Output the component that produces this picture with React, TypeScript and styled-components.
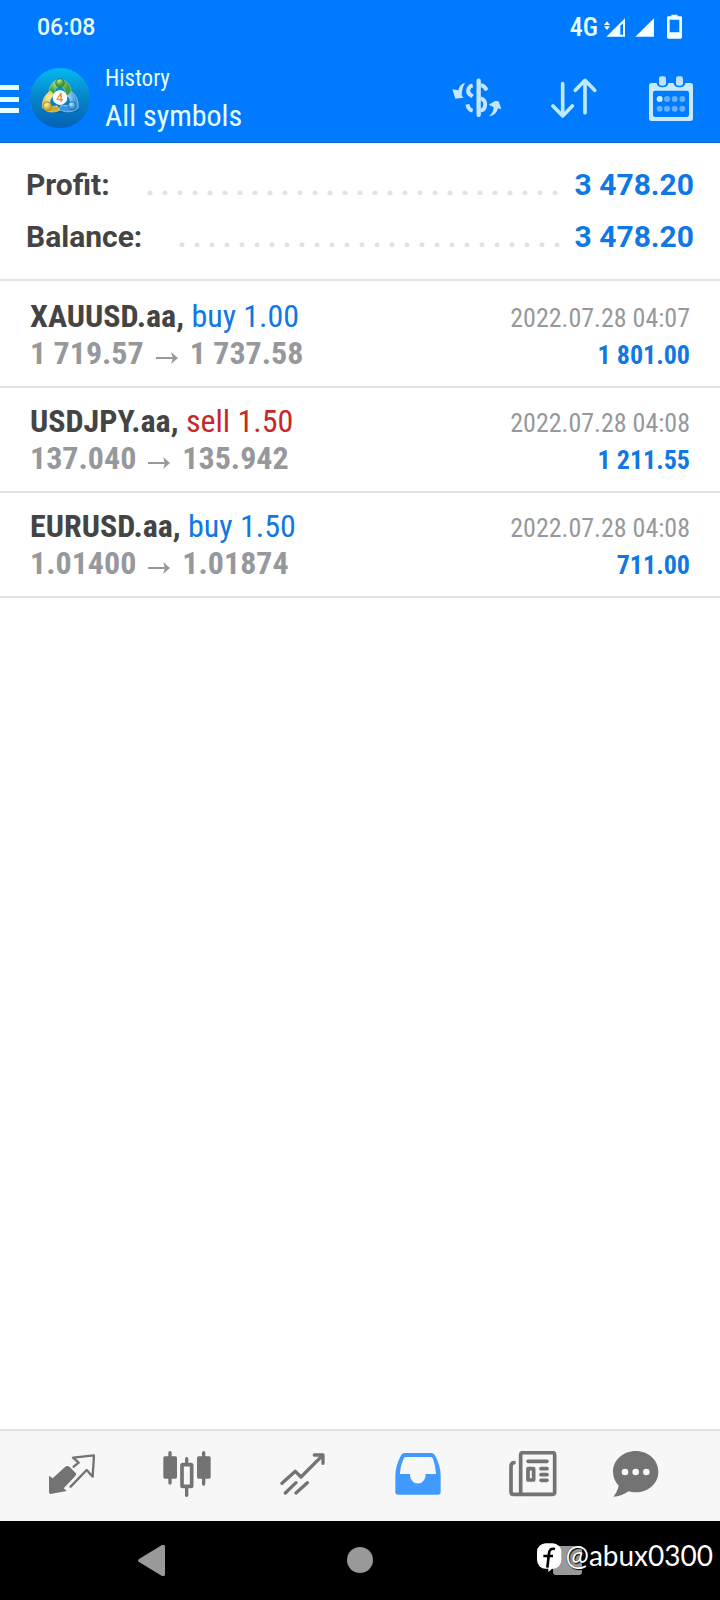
import React from 'react';
import styled, { createGlobalStyle } from 'styled-components';

const condensed = '"Roboto Condensed", "Liberation Sans Narrow", Roboto, sans-serif';

const GlobalStyle = createGlobalStyle`
  *, *::before, *::after { box-sizing: border-box; }
  body { margin: 0; background: #fff; font-family: Roboto, sans-serif; }
  h1, p, dl, dd, dt, ul { margin: 0; padding: 0; font-weight: 400; }
  button { border: 0; padding: 0; background: none; font: inherit; color: inherit; cursor: pointer; }
  svg { display: block; }
`;

const Screen = styled.div`
  display: flex;
  flex-direction: column;
  min-height: 100vh;
  background: #fff;
`;

const TopArea = styled.header`
  background: #007aff;
  border-bottom: 1px solid #0a6cc8;
  color: #e6ffff;
`;

const StatusBar = styled.div`
  display: flex;
  align-items: center;
  justify-content: space-between;
  height: 54px;
  padding: 0 36px 0 37px;
`;

const Clock = styled.time`
  padding-top: 2px;
  font-size: 23px;
  font-weight: 500;
  line-height: 28px;
`;

const StatusIcons = styled.div`
  display: flex;
  align-items: center;
  font-family: ${condensed};
  font-size: 26px;
  font-weight: 500;
  line-height: 28px;
  gap: 5px;
`;

const Toolbar = styled.div`
  display: flex;
  align-items: center;
  height: 88px;
  padding-right: 1px;
`;

const MenuButton = styled.button`
  display: flex;
  align-items: center;
  gap: 11px;
`;

const Titles = styled.div`
  flex: 1;
  padding: 4px 0 0 15px;
  font-family: ${condensed};
`;

const Section = styled.p`
  font-size: 23px;
  line-height: 32px;
`;

const Filter = styled.h1`
  font-size: 30px;
  line-height: 42px;
`;

const Action = styled.button`
  display: flex;
  align-items: center;
  justify-content: center;
  width: 97px;
  height: 88px;
`;

const Summary = styled.dl`
  padding: 16px 26px;
  border-bottom: 2px solid #e2e2e2;
  font-size: 30px;
  line-height: 52px;
`;

const SummaryRow = styled.div`
  display: flex;
  align-items: center;
`;

const Label = styled.dt`
  color: #444;
  font-weight: 700;
`;

const Leader = styled.span`
  flex: 1;
  height: 5px;
  margin: 14px 12px 0 37px;
  background: radial-gradient(circle at 3px 3px, #e2e2e2 2px, transparent 3px) 0 0 / 15px 5px repeat-x;
`;

const Total = styled.dd`
  color: #1078e4;
  font-weight: 700;
`;

const Deals = styled.ul`
  flex: 1;
  && { padding-top: 2px; }
  list-style: none;
  font-family: ${condensed};
`;

const Deal = styled.li`
  padding: 15px 30px 14px;
  border-bottom: 2px solid #e2e2e2;
`;

const DealLine = styled.div`
  display: flex;
  align-items: baseline;
  justify-content: space-between;
  height: 37px;
  line-height: 37px;
`;

const Symbol = styled.span`
  color: #444;
  font-size: 32px;
  font-weight: 700;
`;

const Side = styled.span<{ $sell?: boolean }>`
  color: ${(p) => (p.$sell ? '#c62828' : '#1078e4')};
  font-weight: 400;
`;

const Prices = styled.span`
  display: flex;
  align-items: baseline;
  gap: 12px;
  color: #96989c;
  font-size: 32px;
  font-weight: 700;
`;

const Time = styled.time`
  color: #96989c;
  font-size: 26px;
`;

const Profit = styled.span`
  color: #1078e4;
  font-size: 26px;
  font-weight: 700;
`;

const Tabs = styled.nav`
  display: grid;
  grid-template-columns: repeat(5, 115fr) 91fr;
  height: 92px;
  padding: 0 38px 4px 14px;
  border-top: 2px solid #e2e2e2;
  background: #f7f7f7;
`;

const Tab = styled.button<{ $active?: boolean }>`
  display: flex;
  align-items: center;
  justify-content: center;
  color: ${(p) => (p.$active ? '#419bff' : '#737373')};
`;

const SystemBar = styled.footer`
  position: relative;
  height: 79px;
  background: #000;
  color: #999;
`;

const SystemButton = styled.button`
  display: flex;
  align-items: center;
`;

const SystemKeys = styled.div`
  display: flex;
  align-items: center;
  justify-content: space-between;
  height: 79px;
  padding: 0 138px;
`;

const Watermark = styled.div`
  position: absolute;
  right: 7px;
  top: 22px;
  display: flex;
  align-items: flex-start;
  gap: 3px;
  color: #fff;
  font-family: Lato, sans-serif;
  font-size: 28px;
  line-height: 24px;
  text-shadow: 0 0 1px #000, 1px 1px 1px #000;
`;

const SignalIcons = () => (
  <svg width="81" height="26" viewBox="492 40 243 78" fill="#f4ffff">
    <path d="M495 73l9-11 9 11zM495 77l9 11 9-11z" />
    <path d="M558 53v55h-56z" />
    <path d="M544 76l8-8v34h-8z" fill="#007aff" />
    <path d="M645 53v55h-56z" />
    <path fillRule="evenodd" d="M697 47v-5h19v5h9q4 0 4 4v59q0 4-4 4h-37q-4 0-4-4V51q0-4 4-4zM692 57v38h29V57z" />
  </svg>
);

const MenuIcon = () => (
  <svg width="19" height="30" viewBox="0 0 19 30" fill="#e6ffff">
    <path d="M0 2h19v5H0zM0 14h19v5H0zM0 25h19v5H0z" />
  </svg>
);

const Logo = () => (
  <svg width="60" height="60" viewBox="90 204 180 180">
    <defs>
      <linearGradient id="disc" x1="0" y1="0" x2="0" y2="1">
        <stop offset="0" stopColor="#04b9ee" />
        <stop offset=".45" stopColor="#0788cd" />
        <stop offset="1" stopColor="#0560b4" />
      </linearGradient>
      <radialGradient id="green" cx=".4" cy=".25"><stop offset="0" stopColor="#c4ec86" /><stop offset="1" stopColor="#3f9d42" /></radialGradient>
      <radialGradient id="gold" cx=".4" cy=".3"><stop offset="0" stopColor="#fff3a0" /><stop offset="1" stopColor="#d0ac2c" /></radialGradient>
      <radialGradient id="sky" cx=".4" cy=".3"><stop offset="0" stopColor="#b9e8ff" /><stop offset="1" stopColor="#3a94dc" /></radialGradient>
    </defs>
    <circle cx="180" cy="294" r="90" fill="url(#disc)" />
    <ellipse cx="182" cy="330" rx="54" ry="8" fill="#034a86" opacity=".5" />
    <path d="M148 284c-4-24 10-44 32-46 22 2 38 24 33 48l-16 2c0-18-6-28-17-29-11 1-16 10-17 24z" fill="url(#green)" stroke="#8fd08a" strokeWidth="2" />
    <path d="M152 273c-16 8-26 28-25 49 8 15 32 18 52 9l-8-14c-10 4-18 3-21-4-2-11 3-22 13-27z" fill="url(#gold)" stroke="#f0e6a0" strokeWidth="2" />
    <path d="M214 275c16 10 22 30 20 49-12 14-39 15-58 4l9-14c13 5 24 3 26-6 0-9-3-15-8-20z" fill="url(#sky)" stroke="#a8dcf8" strokeWidth="2" />
    <circle cx="180" cy="249" r="13" fill="url(#green)" stroke="#246d32" strokeWidth="2" />
    <circle cx="142" cy="319" r="13" fill="url(#gold)" stroke="#8b741c" strokeWidth="2" />
    <circle cx="216" cy="317" r="12" fill="url(#sky)" stroke="#185c99" strokeWidth="2" />
    <circle cx="180" cy="293" r="22" fill="#fff" />
    <text x="179" y="306" textAnchor="middle" fontFamily="Roboto, sans-serif" fontSize="37" fontWeight="500" fill="#ee8a45">4</text>
  </svg>
);

const CurrencyIcon = () => (
  <svg width="50" height="40" viewBox="37 232 150 120" fill="none" stroke="#c4e6ff" strokeWidth="12">
    <path d="M117 240v103" strokeWidth="13" strokeLinecap="round" />
    <path d="M99 254c-16 4-17 23-6 29l6 4M123 254c10 1 14 6 18 15M123 293c18 5 18 32 0 37M99 330c-9-2-14-9-16-19" />
    <path d="M76 247c-12 2-18 12-20 22l-18-3 9 28 25-3c-5-4-6-5-6-11 1-13 5-24 10-33zM147 347c10-6 14-14 15-27l-15-8 19-11 11 1 8 24-10-3c-3 12-12 23-28 24z" fill="#c4e6ff" stroke="none" />
  </svg>
);

const SortIcon = () => (
  <svg width="46" height="40" viewBox="333 232 138 120" fill="none" stroke="#bfe9ff" strokeWidth="11" strokeLinecap="round" strokeLinejoin="round">
    <path d="M368 249v96M339 316l29 30 29-30M435 336v-95M406 269l29-30 29 30" />
  </svg>
);

const CalendarIcon = () => (
  <svg width="44" height="45" viewBox="627 222 132 135">
    <path fill="#c9e9ff" fillRule="evenodd" d="M635 243h15c0 17 35 17 35 0h16c0 17 35 17 35 0h15q8 0 8 8v98q0 8-8 8H635q-8 0-8-8v-98q0-8 8-8zM646 266q-7 0-7 7v65q0 7 7 7h94q7 0 7-7v-65q0-7-7-7z" />
    <rect x="657" y="223" width="21" height="28" rx="7" fill="#bfe3ff" />
    <rect x="708" y="223" width="21" height="28" rx="7" fill="#bfe3ff" />
    <g fill="#62b1ff">
      <circle cx="659" cy="291" r="9" fill="#cdeeff" />
      {[681, 704, 727].map((x) => <circle key={x} cx={x} cy="291" r="9" />)}
      {[659, 681, 704, 727].map((x) => <circle key={x} cx={x} cy="320" r="9" />)}
    </g>
  </svg>
);

const QuotesIcon = () => (
  <svg width="46" height="40" viewBox="149 105 138 120">
    <path fill="currentColor" d="M149 170l11 8 37-34q8-6 14 0l18 18q4 5-1 9l-35 37 9 8q-24 5-48 9-5 0-5-5z" />
    <path fill="none" stroke="currentColor" strokeWidth="7" strokeLinecap="round" strokeLinejoin="round" d="M223 143l15-12-17-15 63-7-4 64-18-20-48 50" />
  </svg>
);

const ChartIcon = () => (
  <svg width="48" height="46" viewBox="491 94 144 138" fill="currentColor">
    <rect x="492" y="110" width="41" height="67" rx="5" />
    <rect x="507" y="94" width="10" height="101" rx="5" />
    <rect x="593" y="110" width="41" height="67" rx="5" />
    <rect x="608" y="94" width="10" height="104" rx="5" />
    <rect x="557" y="112" width="10" height="25" rx="5" />
    <rect x="557" y="198" width="10" height="34" rx="5" />
    <rect x="548" y="135" width="29" height="65" rx="2" fill="none" stroke="currentColor" strokeWidth="11" />
  </svg>
);

const TradeIcon = () => (
  <svg width="45" height="42" viewBox="839 99 135 126" fill="none" stroke="currentColor" strokeWidth="10" strokeLinecap="round" strokeLinejoin="round">
    <path d="M845 190l40-36 17 17 64-64M942 105h26v25M855 219l32-31M887 219l34-31" />
  </svg>
);

const HistoryIcon = () => (
  <svg width="46" height="42" viewBox="104 99 138 126" fill="currentColor">
    <path fillRule="evenodd" d="M132 99h80q9 0 13 9 16 30 16 60v48q0 8-8 8H113q-8 0-8-8v-48q0-29 16-60 4-9 11-9zM136 111q-4 0-6 5-10 20-11 46h30c0 38 47 38 47 0h31q-1-23-9-46-2-5-7-5z" />
  </svg>
);

const NewsIcon = () => (
  <svg width="48" height="46" viewBox="448 94 144 138" fill="none" stroke="currentColor" strokeWidth="11" strokeLinecap="round">
    <rect x="483" y="99" width="102" height="125" rx="6" />
    <path d="M463 129q-9 1-9 11v76q0 8 8 8h24M505 125h57M544 147h18M544 165h18M544 182h18" />
    <rect x="505" y="147" width="17" height="34" rx="1" />
  </svg>
);

const MessagesIcon = () => (
  <svg width="46" height="46" viewBox="760 94 138 138">
    <path fill="currentColor" d="M828 94c38 0 68 27 68 62s-30 62-68 62c-8 0-14-1-21-3-13 9-28 16-46 16 8-10 14-21 16-33-10-11-17-25-17-42 0-35 31-62 68-62z" />
    <g fill="#f7f7f7"><circle cx="796" cy="157" r="10" /><circle cx="828" cy="157" r="10" /><circle cx="860" cy="157" r="10" /></g>
  </svg>
);

const FacebookIcon = () => (
  <svg width="25" height="29" viewBox="530 371 75 87">
    <rect x="530" y="372" width="73" height="76" rx="26" fill="#fff" />
    <path d="M564 444v14l14-12 10-8z" fill="#fff" />
    <path d="M584 389c-12-3-17 3-18 13l-5 43M549 410h29" fill="none" stroke="#000" strokeWidth="8" />
  </svg>
);

const deals = [
  { symbol: 'XAUUSD.aa', side: 'buy', volume: '1.00', open: '1 719.57', close: '1 737.58', time: '2022.07.28 04:07', profit: '1 801.00' },
  { symbol: 'USDJPY.aa', side: 'sell', volume: '1.50', open: '137.040', close: '135.942', time: '2022.07.28 04:08', profit: '1 211.55' },
  { symbol: 'EURUSD.aa', side: 'buy', volume: '1.50', open: '1.01400', close: '1.01874', time: '2022.07.28 04:08', profit: '711.00' },
];

const totals = [
  { label: 'Profit:', value: '3 478.20' },
  { label: 'Balance:', value: '3 478.20' },
];

const tabs = [
  { name: 'Quotes', Icon: QuotesIcon },
  { name: 'Chart', Icon: ChartIcon },
  { name: 'Trade', Icon: TradeIcon },
  { name: 'History', Icon: HistoryIcon },
  { name: 'News', Icon: NewsIcon },
  { name: 'Messages', Icon: MessagesIcon },
];

const Arrow = () => (
  <svg width="22" height="12" viewBox="0 0 22 12" fill="none" stroke="currentColor" strokeWidth="2">
    <path d="M0 6h18" />
    <path d="M15 0l7 6-7 6 2-6z" fill="currentColor" stroke="none" />
  </svg>
);

export default function App() {
  return (
    <Screen>
      <GlobalStyle />
      <TopArea>
        <StatusBar>
          <Clock>06:08</Clock>
          <StatusIcons>
            4G
            <SignalIcons />
          </StatusIcons>
        </StatusBar>
        <Toolbar>
          <MenuButton aria-label="Open menu">
            <MenuIcon />
            <Logo />
          </MenuButton>
          <Titles>
            <Section>History</Section>
            <Filter>All symbols</Filter>
          </Titles>
          <Action aria-label="Symbol filter"><CurrencyIcon /></Action>
          <Action aria-label="Sort"><SortIcon /></Action>
          <Action aria-label="Period"><CalendarIcon /></Action>
        </Toolbar>
      </TopArea>
      <Summary>
        {totals.map((t) => (
          <SummaryRow key={t.label}>
            <Label>{t.label}</Label>
            <Leader />
            <Total>{t.value}</Total>
          </SummaryRow>
        ))}
      </Summary>
      <Deals>
        {deals.map((d) => (
          <Deal key={d.symbol}>
            <DealLine>
              <Symbol>
                {d.symbol}, <Side $sell={d.side === 'sell'}>{d.side} {d.volume}</Side>
              </Symbol>
              <Time>{d.time}</Time>
            </DealLine>
            <DealLine>
              <Prices>
                <span>{d.open}</span>
                <Arrow />
                <span>{d.close}</span>
              </Prices>
              <Profit>{d.profit}</Profit>
            </DealLine>
          </Deal>
        ))}
      </Deals>
      <Tabs>
        {tabs.map(({ name, Icon }) => (
          <Tab key={name} aria-label={name} $active={name === 'History'}>
            <Icon />
          </Tab>
        ))}
      </Tabs>
      <SystemBar>
        <SystemKeys>
          <SystemButton aria-label="Back">
            <svg width="27" height="31" viewBox="0 0 27 31" fill="currentColor">
              <path d="M24 0q3-1 3 2v27q0 3-3 2L1 17q-2-1 0-3z" />
            </svg>
          </SystemButton>
          <SystemButton aria-label="Home">
            <svg width="27" height="27" viewBox="0 0 27 27" fill="currentColor">
              <circle cx="14" cy="13" r="13" />
            </svg>
          </SystemButton>
          <SystemButton aria-label="Recent apps">
            <svg width="29" height="29" viewBox="0 0 29 29" fill="currentColor">
              <rect width="29" height="29" rx="3" />
            </svg>
          </SystemButton>
        </SystemKeys>
        <Watermark>
          <FacebookIcon />
          <span>@abux0300</span>
        </Watermark>
      </SystemBar>
    </Screen>
  );
}
